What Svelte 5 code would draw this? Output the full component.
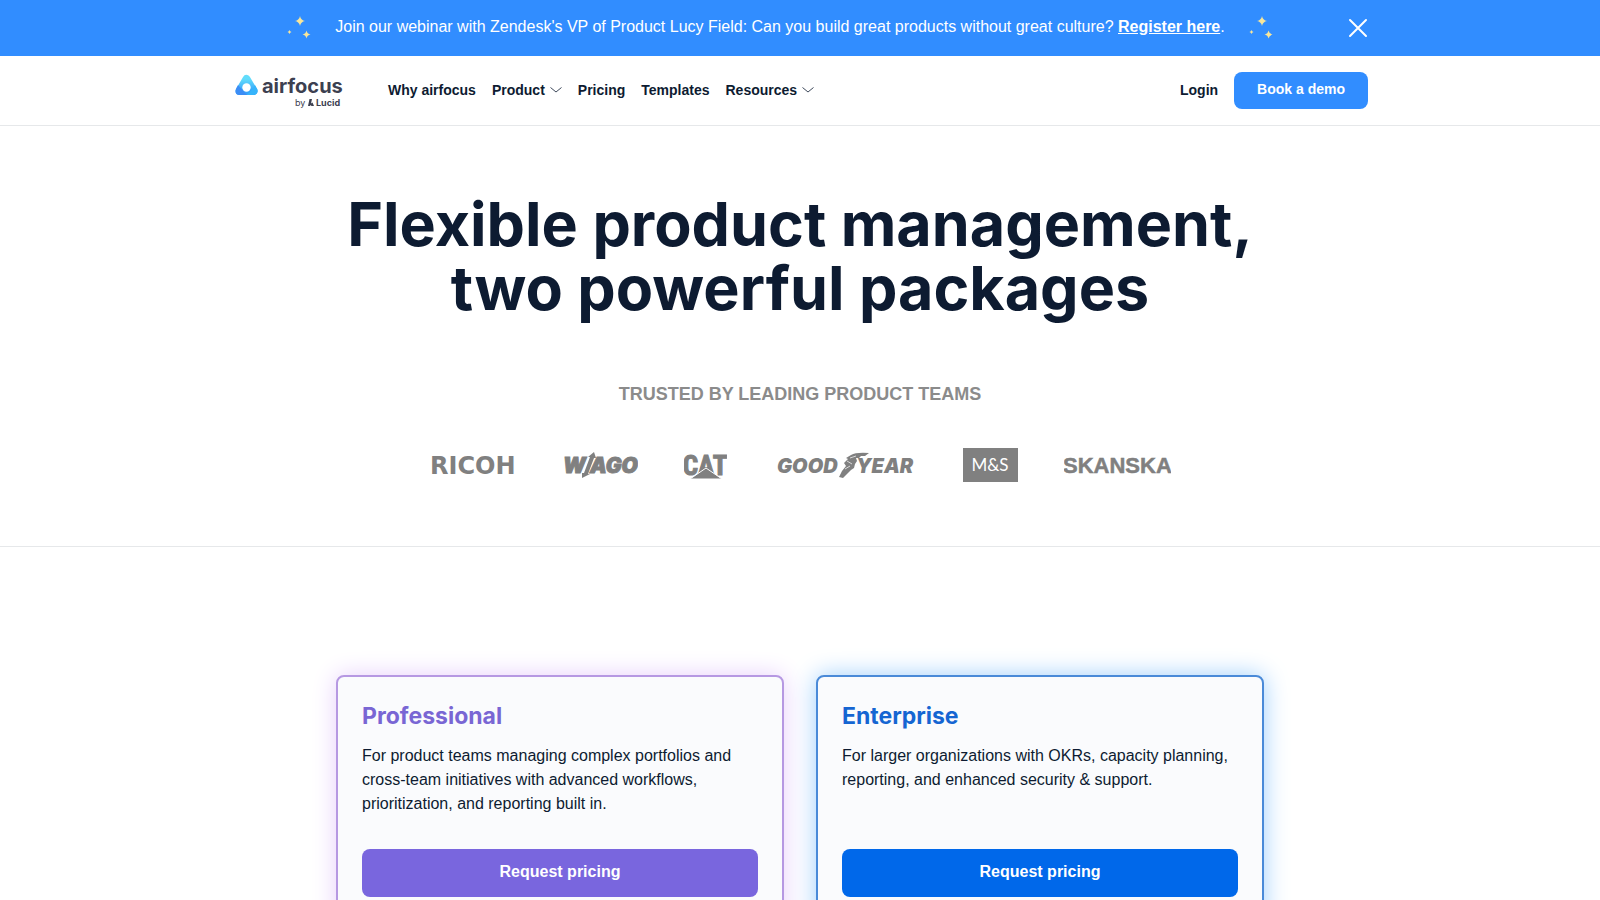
<script lang="ts">
  type Plan = { id: string; name: string; text: string };

  const nav = [
    { label: "Why airfocus", menu: false },
    { label: "Product", menu: true },
    { label: "Pricing", menu: false },
    { label: "Templates", menu: false },
    { label: "Resources", menu: true },
  ];

  const plans: Plan[] = [
    {
      id: "professional",
      name: "Professional",
      text: "For product teams managing complex portfolios and cross-team initiatives with advanced workflows, prioritization, and reporting built in.",
    },
    {
      id: "enterprise",
      name: "Enterprise",
      text: "For larger organizations with OKRs, capacity planning, reporting, and enhanced security & support.",
    },
  ];

  let bannerOpen = $state(true);
</script>

{#snippet sparkles()}
  <svg class="sparkles" width="24" height="24" viewBox="0 0 24 24" aria-hidden="true">
    <path d="M13 0Q13.8 4.2 18 5Q13.8 5.8 13 10Q12.2 5.8 8 5Q12.2 4.2 13 0Z" />
    <path d="M19.5 14.5Q20.2 17.8 23.5 18.5Q20.2 19.2 19.5 22.5Q18.8 19.2 15.5 18.5Q18.8 17.8 19.5 14.5Z" />
    <path d="M2.5 14Q2.9 15.6 4.5 16Q2.9 16.4 2.5 18Q2.1 16.4 .5 16Q2.1 15.6 2.5 14Z" />
  </svg>
{/snippet}

<div class="page">
  {#if bannerOpen}
    <aside class="banner">
      <div class="wrap banner-row">
        <div class="message">
          {@render sparkles()}
          <p>
            Join our webinar with Zendesk's VP of Product Lucy Field: Can you build great products without great culture?
            <a href="#register">Register here</a>.
          </p>
          {@render sparkles()}
        </div>
        <button class="close" aria-label="Close" onclick={() => (bannerOpen = false)}>
          <svg width="20" height="20" viewBox="0 0 20 20" fill="none" stroke="#fff" stroke-width="2" stroke-linecap="round">
            <path d="M2 2L18 18M18 2L2 18" />
          </svg>
        </button>
      </div>
    </aside>
  {/if}

  <header>
    <div class="wrap header-row">
      <a class="brand" href="#home" aria-label="airfocus by Lucid">
        <svg width="112" height="36" viewBox="0 0 112 36">
          <defs>
            <linearGradient id="mark" x1="0" y1="0" x2="0" y2="1">
              <stop offset="0" stop-color="#62dcfb" />
              <stop offset="1" stop-color="#36a3fb" />
            </linearGradient>
          </defs>
          <path d="M14.5 6L21.5 18H7.5Z" fill="url(#mark)" stroke="url(#mark)" stroke-width="8" stroke-linejoin="round" />
          <path d="M6 12L15 22H7.5Q3.5 22 3.5 18Q3.5 16.5 6 12Z" fill="#3c8df5" />
          <path d="M23 12L25.5 16.5Q26 22 21.5 22H15L20 16.5Z" fill="#36b4fb" />
          <circle cx="14.5" cy="14.5" r="4.200" fill="#fff" />
          <text x="30" y="20" class="brand-name">airfocus</text>
          <text x="63" y="33" class="brand-by">by</text>
          <path d="M77.5 26H80L79 30.5L80.500 29.500L82 33H79.500L78.500 32L78 33H76Z" fill="#3c4050" />
          <text x="84" y="33" class="brand-lucid">Lucid</text>
        </svg>
      </a>
      <nav>
        {#each nav as item}
          {#if item.menu}
            <button class="nav-item">
              {item.label}
              <svg width="12" height="6" viewBox="0 0 12 6" fill="none" stroke="currentColor" stroke-width="0.8">
                <path d="M.5 .5L6 5L11.500 .5" />
              </svg>
            </button>
          {:else}
            <a class="nav-item" href="#{item.label}">{item.label}</a>
          {/if}
        {/each}
      </nav>
      <a class="nav-item" href="#login">Login</a>
      <a class="demo" href="#demo">Book a demo</a>
    </div>
  </header>

  <main>
    <section class="hero">
      <h1>Flexible product management,<br />two powerful packages</h1>
      <h2>TRUSTED BY LEADING PRODUCT TEAMS</h2>
      <div class="logos">
        <svg width="88" height="34" viewBox="0 0 88 34">
          <text x="0" y="26" class="ricoh">RICOH</text>
        </svg>
        <svg width="74" height="34" viewBox="0 0 74 34">
          <text x="-1" y="25" class="wago">W</text>
          <text x="26" y="25" class="wago">AGO</text>
          <path d="M18 30L18 25H20L26 9H24L30 4L32 10H30L24 26H26Z" />
        </svg>
        <svg width="43" height="34" viewBox="0 0 43 34">
          <text x="21" y="27" text-anchor="middle" class="cat">CAT</text>
          <path d="M6 31L22 20L38 31Z" stroke="#fff" stroke-width="1" />
        </svg>
        <svg width="144" height="34" viewBox="0 0 144 34">
          <text x="4" y="25" class="goodyear">GOOD</text>
          <text x="83" y="25" class="goodyear">YEAR</text>
          <path d="M66 29L69 23L73 18L71 15L75 11L73 10L78 7Q83 4 96 5L92 8H88L86 10H83L84 13L82 16L81 20L78 22L70 30Z" />
          <path d="M74 13L79 16M72 21L77 18M77 10L83 8" fill="none" stroke="#fff" stroke-width="0.7" />
        </svg>
        <svg width="55" height="34" viewBox="0 0 55 34">
          <rect width="55" height="34" />
          <text x="27" y="23" text-anchor="middle" class="ms">M&amp;S</text>
        </svg>
        <svg width="107" height="34" viewBox="0 0 107 34">
          <text x="-1" y="25" class="skanska">SKANSKA</text>
        </svg>
      </div>
    </section>

    <section class="plans">
      {#each plans as plan (plan.id)}
        <article class="plan {plan.id}">
          <h3>{plan.name}</h3>
          <p>{plan.text}</p>
          <button>Request pricing</button>
        </article>
      {/each}
    </section>
  </main>
</div>

<style>
  :global(body) {
    background: #fff;
  }
  .page {
    font-family: "Liberation Sans", Arial, sans-serif;
    font-size: 16px;
    line-height: 24px;
    color: #0d1b31;
    height: 100vh;
    overflow: hidden;
  }
  .wrap {
    max-width: 1136px;
    margin: 0 auto;
    display: flex;
    align-items: center;
  }
  a {
    color: inherit;
    text-decoration: none;
  }
  button {
    font: inherit;
    color: inherit;
    background: none;
    border: 0;
    padding: 0;
    cursor: pointer;
  }
  h1,
  h2,
  h3,
  p {
    margin: 0;
  }

  .banner {
    background: #318dff;
    color: #fff;
  }
  .banner-row {
    min-height: 56px;
  }
  .message {
    flex: 1;
    display: flex;
    align-items: center;
    justify-content: center;
    gap: 24px;
  }
  .message p {
    padding-bottom: 2px;
  }
  .message a {
    font-weight: 700;
    text-decoration: underline;
  }
  .sparkles {
    flex: none;
    fill: #f8e69a;
  }
  .close {
    width: 40px;
    display: flex;
    justify-content: flex-end;
  }

  header {
    border-bottom: 1px solid #e6e8ea;
  }
  .header-row {
    min-height: 69px;
    gap: 16px;
  }
  .brand {
    display: flex;
    margin-right: 28px;
  }
  .brand-name {
    font: 700 20px Inter, sans-serif;
    fill: #3c4050;
  }
  .brand-by {
    font: 400 9px Inter, sans-serif;
    fill: #3c4050;
  }
  .brand-lucid {
    font: 700 9px Inter, sans-serif;
    fill: #3c4050;
  }
  nav {
    flex: 1;
    display: flex;
    gap: 16px;
  }
  .nav-item {
    display: flex;
    align-items: center;
    gap: 5px;
    padding-bottom: 2px;
    font-size: 14px;
    font-weight: 700;
  }
  .demo {
    background: #318dff;
    color: #fff;
    border-radius: 8px;
    padding: 5px 23px 8px;
    font-size: 14px;
    font-weight: 700;
  }

  .hero {
    display: flex;
    flex-direction: column;
    align-items: center;
    padding: 66px 24px 64px;
    border-bottom: 1px solid #e6e8ea;
  }
  h1 {
    font: 700 61px/64px Inter, sans-serif;
    text-align: center;
  }
  h2 {
    margin-top: 62px;
    font-size: 18px;
    color: #8b8b8b;
  }
  .logos {
    display: flex;
    flex-wrap: wrap;
    justify-content: center;
    gap: 46px;
    margin-top: 42px;
    fill: #808080;
  }
  .ricoh {
    font: 700 24px "DejaVu Sans", sans-serif;
  }
  .wago {
    font: italic 900 21px Inter, sans-serif;
    stroke: #808080;
    stroke-width: 1;
  }
  .cat {
    font: 700 27px "Roboto Condensed", Roboto, sans-serif;
    stroke: #808080;
    stroke-width: 1;
  }
  .goodyear {
    font: italic 900 20px Inter, sans-serif;
  }
  .ms {
    font: 400 17px Lato, sans-serif;
    fill: #fff;
  }
  .skanska {
    font: 700 22px "Liberation Sans", sans-serif;
    stroke: #808080;
    stroke-width: 0.5;
  }

  .plans {
    display: grid;
    grid-template-columns: 1fr 1fr;
    gap: 32px;
    max-width: 928px;
    margin: 0 auto;
    padding: 128px 0;
  }
  .plan {
    display: flex;
    flex-direction: column;
    padding: 24px;
    border: 2px solid;
    border-radius: 8px;
    background: #fafbfd;
  }
  .plan h3 {
    font: 700 23px/30px Inter, sans-serif;
  }
  .plan p {
    flex: 1;
    margin: 13px 0 33px;
  }
  .plan button {
    min-height: 48px;
    padding-bottom: 2px;
    border-radius: 8px;
    color: #fff;
    font-weight: 700;
  }
  .professional {
    border-color: #b698e2;
    box-shadow: 0 0 24px #e6cffb;
  }
  .professional h3 {
    color: #7966d4;
  }
  .professional button {
    background: #7966de;
  }
  .enterprise {
    border-color: #4a8ad8;
    box-shadow: 0 0 24px #9fcffc;
  }
  .enterprise h3 {
    color: #1565d2;
  }
  .enterprise button {
    background: #0068ea;
  }
</style>
